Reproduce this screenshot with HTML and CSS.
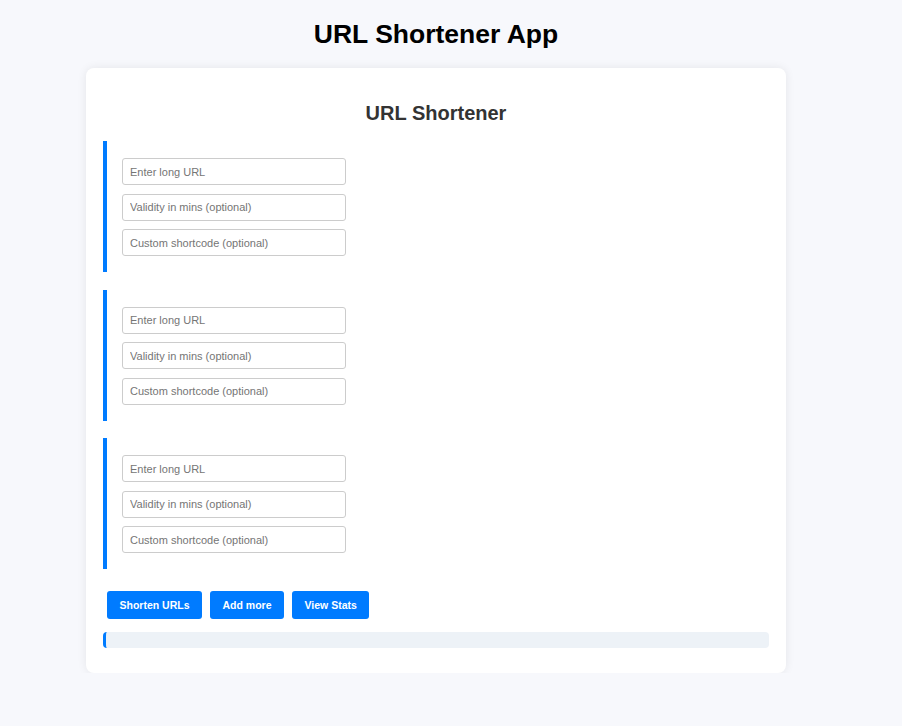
FILE: index.html
```html
<!DOCTYPE html>
<html lang="en">
<head>
<meta charset="utf-8">
<title>URL Shortener App</title>
<link rel="stylesheet" href="styles.css">
</head>
<body>
<div class="page">
  <h1 class="app-title">URL Shortener App</h1>
  <div class="card">
    <h2 class="card-title">URL Shortener</h2>
    <div class="group">
      <input class="field" type="text" placeholder="Enter long URL">
      <input class="field" type="text" placeholder="Validity in mins (optional)">
      <input class="field" type="text" placeholder="Custom shortcode (optional)">
    </div>
    <div class="group">
      <input class="field" type="text" placeholder="Enter long URL">
      <input class="field" type="text" placeholder="Validity in mins (optional)">
      <input class="field" type="text" placeholder="Custom shortcode (optional)">
    </div>
    <div class="group">
      <input class="field" type="text" placeholder="Enter long URL">
      <input class="field" type="text" placeholder="Validity in mins (optional)">
      <input class="field" type="text" placeholder="Custom shortcode (optional)">
    </div>
    <div class="actions">
      <button class="btn">Shorten URLs</button>
      <button class="btn">Add more</button>
      <button class="btn">View Stats</button>
    </div>
    <div class="results"></div>
  </div>
</div>
</body>
</html>
```
FILE: styles.css
```css
html, body {
  margin: 0;
  padding: 0;
  background: #f7f8fc;
  font-family: "Liberation Sans", Arial, sans-serif;
}

.page {
  width: 872px;
  padding-top: 19px;
}

.app-title {
  margin: 0 0 19px;
  text-align: center;
  font-size: 26.5px;
  line-height: 30px;
  font-weight: bold;
  color: #000;
}

.card {
  width: 700px;
  box-sizing: border-box;
  margin: 0 auto;
  background: #fff;
  border-radius: 8px;
  box-shadow: 0 0 10px rgba(0, 0, 0, 0.08);
  padding: 17px 17px 25px;
}

.card-title {
  margin: 16.5px 0 16.5px;
  text-align: center;
  font-size: 20px;
  line-height: 23px;
  color: #333;
}

.group {
  display: flex;
  flex-direction: column;
  align-items: flex-start;
  gap: 8.5px;
  border-left: 4px solid #007bff;
  padding: 17px 0 16px 15px;
  margin-bottom: 17.5px;
}

.field {
  box-sizing: border-box;
  width: 224px;
  height: 27px;
  margin: 0;
  padding: 0 7px;
  border: 1px solid #ccc;
  border-radius: 3px;
  font-family: "Liberation Sans", Arial, sans-serif;
  font-size: 11px;
  color: #333;
  background: #fff;
}

.field::placeholder {
  color: #757575;
}

.actions {
  display: flex;
  margin-top: 22px;
}

.btn {
  height: 28px;
  margin: 0 4px;
  padding: 0 12.5px;
  border: 0;
  border-radius: 3px;
  background: #007bff;
  color: #fff;
  font-family: "Liberation Sans", Arial, sans-serif;
  font-size: 10.5px;
  font-weight: bold;
}

.results {
  margin-top: 13px;
  height: 16px;
  background: #edf2f7;
  border-left: 3px solid #007bff;
  border-radius: 4px;
}
```
